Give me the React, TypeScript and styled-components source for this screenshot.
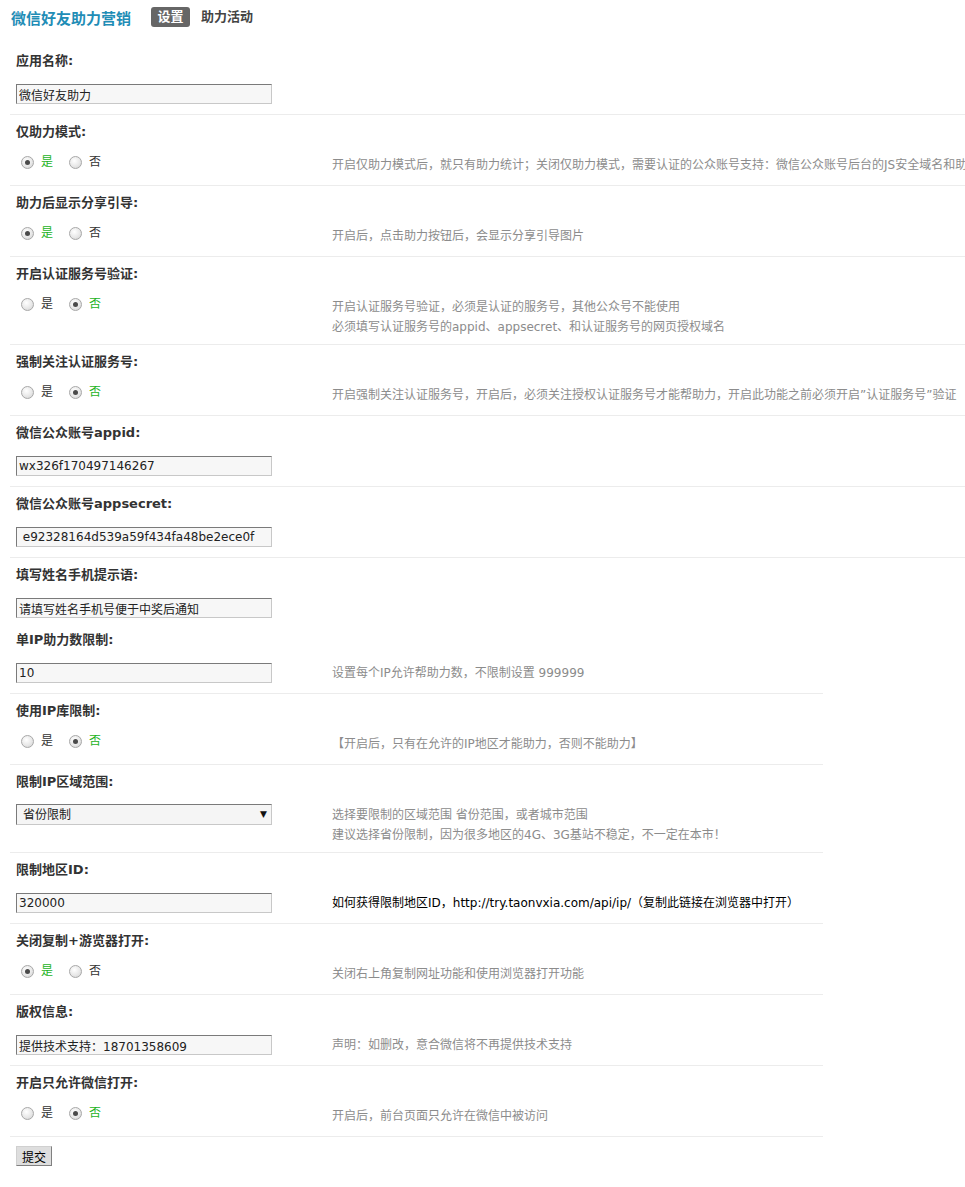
import React from "react";
import styled, { createGlobalStyle, css } from "styled-components";

const FONT = `"DejaVu Sans", "Noto Sans CJK SC", sans-serif`;

const GlobalStyle = createGlobalStyle`
  html, body {
    margin: 0;
    padding: 0;
    background: #ffffff;
  }
  body {
    font-family: ${FONT};
    font-size: 12px;
    color: #333333;
  }
  * { box-sizing: border-box; }
`;

const Page = styled.div`
  width: 965px;
  overflow: hidden;
  padding-bottom: 20px;
`;

const Header = styled.div`
  display: flex;
  align-items: center;
  height: 34px;
  padding-left: 11px;
  margin-bottom: 10px;
`;

const Title = styled.div`
  font-size: 15px;
  font-weight: bold;
  color: #1f8db6;
  margin-right: 20px;
  white-space: nowrap;
`;

const Tab = styled.div<{ $active?: boolean }>`
  height: 20px;
  line-height: 20px;
  font-size: 13px;
  font-weight: bold;
  white-space: nowrap;
  border-radius: 3px;
  ${(p) =>
    p.$active
      ? css`
          background: #666666;
          color: #ffffff;
          width: 39px;
          text-align: center;
          margin-right: 11px;
        `
      : css`
          color: #444444;
        `}
`;

const Section = styled.div<{ $width: number }>`
  width: ${(p) => p.$width}px;
  margin-left: 10px;
  display: flex;
  flex-direction: column;
`;

const Row = styled.div<{ $last?: boolean }>`
  display: flex;
  align-items: stretch;
  border-bottom: ${(p) => (p.$last ? "none" : "1px solid #ececec")};
`;

const FieldCell = styled.div<{ $last?: boolean }>`
  width: 312px;
  flex: none;
  padding: 9px 6px ${(p) => (p.$last ? "5px" : "10px")} 6px;
`;

const Label = styled.div`
  height: 16px;
  line-height: 16px;
  font-size: 13px;
  font-weight: bold;
  color: #333333;
  margin-bottom: 9px;
  white-space: nowrap;
`;

const Control = styled.div<{ $align: "center" | "end" }>`
  height: 26px;
  display: flex;
  align-items: ${(p) => (p.$align === "center" ? "center" : "flex-end")};
`;

const TextInput = styled.input`
  width: 256px;
  height: 20px;
  padding: 0 2px;
  margin: 0;
  font-family: ${FONT};
  font-size: 12px;
  color: #222222;
  background: #f7f7f7;
  border-style: solid;
  border-width: 1px;
  border-color: #7a7a7a #c8c8c8 #c8c8c8 #7a7a7a;
  outline: none;
  white-space: pre;
`;

const RadioGroup = styled.div`
  display: flex;
  align-items: center;
  padding-left: 5px;
`;

const RadioItem = styled.label`
  display: flex;
  align-items: center;
  margin-right: 16px;
  cursor: pointer;
`;

const RadioDot = styled.span<{ $checked?: boolean }>`
  position: relative;
  width: 13px;
  height: 13px;
  border-radius: 50%;
  border: 1px solid #a8a8a8;
  background: radial-gradient(circle at 40% 35%, #ffffff 0%, #e8e8e8 55%, #cfcfcf 100%);
  margin-right: 7px;
  &::after {
    content: "";
    display: ${(p) => (p.$checked ? "block" : "none")};
    position: absolute;
    left: 3px;
    top: 3px;
    width: 5px;
    height: 5px;
    border-radius: 50%;
    background: #4a4a4a;
  }
`;

const RadioText = styled.span<{ $checked?: boolean }>`
  font-size: 12px;
  line-height: 16px;
  color: ${(p) => (p.$checked ? "#1db31d" : "#333333")};
`;

const SelectWrap = styled.div`
  position: relative;
  width: 256px;
  height: 21px;
`;

const SelectBox = styled.select`
  appearance: none;
  -webkit-appearance: none;
  width: 256px;
  height: 21px;
  padding: 0 0 0 6px;
  margin: 0;
  font-family: ${FONT};
  font-size: 12px;
  color: #222222;
  background: #f5f5f5;
  border-style: solid;
  border-width: 1px;
  border-color: #7a7a7a #c8c8c8 #c8c8c8 #7a7a7a;
  border-radius: 0;
  outline: none;
`;

const SelectArrow = styled.span`
  position: absolute;
  right: 5px;
  top: 4px;
  font-size: 9px;
  line-height: 12px;
  color: #111111;
  pointer-events: none;
`;

const HelpCell = styled.div`
  flex: 1;
  min-width: 0;
  padding: 40px 0 7px 10px;
  white-space: nowrap;
`;

const HelpLine = styled.div<{ $dark?: boolean }>`
  font-size: 12px;
  line-height: 20px;
  color: ${(p) => (p.$dark ? "#000000" : "#8c8c8c")};
`;

const SubmitButton = styled.button`
  margin: 9px 0 0 6px;
  width: 36px;
  height: 20px;
  padding: 0;
  font-family: ${FONT};
  font-size: 12px;
  color: #000000;
  background: #dedede;
  border-style: solid;
  border-width: 1px;
  border-color: #d0d0d0 #808080 #808080 #d0d0d0;
  cursor: pointer;
`;

type Field =
  | { kind: "input"; label: string; value: string }
  | { kind: "radio"; label: string; yes: boolean }
  | { kind: "select"; label: string; value: string };

type RowData = {
  field: Field;
  help?: string[];
  dark?: boolean;
  last?: boolean;
};

const sectionOne: RowData[] = [
  { field: { kind: "input", label: "应用名称:", value: "微信好友助力" } },
  {
    field: { kind: "radio", label: "仅助力模式:", yes: true },
    help: [
      "开启仅助力模式后，就只有助力统计；关闭仅助力模式，需要认证的公众账号支持：微信公众账号后台的JS安全域名和助力活动",
    ],
  },
  {
    field: { kind: "radio", label: "助力后显示分享引导:", yes: true },
    help: ["开启后，点击助力按钮后，会显示分享引导图片"],
  },
  {
    field: { kind: "radio", label: "开启认证服务号验证:", yes: false },
    help: [
      "开启认证服务号验证，必须是认证的服务号，其他公众号不能使用",
      "必须填写认证服务号的appid、appsecret、和认证服务号的网页授权域名",
    ],
  },
  {
    field: { kind: "radio", label: "强制关注认证服务号:", yes: false },
    help: [
      "开启强制关注认证服务号，开启后，必须关注授权认证服务号才能帮助力，开启此功能之前必须开启”认证服务号”验证",
    ],
  },
  { field: { kind: "input", label: "微信公众账号appid:", value: "wx326f170497146267" } },
  {
    field: {
      kind: "input",
      label: "微信公众账号appsecret:",
      value: " e92328164d539a59f434fa48be2ece0f",
    },
  },
  {
    field: { kind: "input", label: "填写姓名手机提示语:", value: "请填写姓名手机号便于中奖后通知" },
    last: true,
  },
];

const sectionTwo: RowData[] = [
  {
    field: { kind: "input", label: "单IP助力数限制:", value: "10" },
    help: ["设置每个IP允许帮助力数，不限制设置 999999"],
  },
  {
    field: { kind: "radio", label: "使用IP库限制:", yes: false },
    help: ["【开启后，只有在允许的IP地区才能助力，否则不能助力】"],
  },
  {
    field: { kind: "select", label: "限制IP区域范围:", value: "省份限制" },
    help: [
      "选择要限制的区域范围 省份范围，或者城市范围",
      "建议选择省份限制，因为很多地区的4G、3G基站不稳定，不一定在本市！",
    ],
  },
  {
    field: { kind: "input", label: "限制地区ID:", value: "320000" },
    help: ["如何获得限制地区ID，http://try.taonvxia.com/api/ip/（复制此链接在浏览器中打开）"],
    dark: true,
  },
  {
    field: { kind: "radio", label: "关闭复制+游览器打开:", yes: true },
    help: ["关闭右上角复制网址功能和使用浏览器打开功能"],
  },
  {
    field: { kind: "input", label: "版权信息:", value: "提供技术支持：18701358609" },
    help: ["声明：如删改，意合微信将不再提供技术支持"],
  },
  {
    field: { kind: "radio", label: "开启只允许微信打开:", yes: false },
    help: ["开启后，前台页面只允许在微信中被访问"],
  },
];

function FieldControl({ field, name }: { field: Field; name: string }) {
  if (field.kind === "input") {
    return (
      <Control $align="end">
        <TextInput type="text" defaultValue={field.value} />
      </Control>
    );
  }
  if (field.kind === "select") {
    return (
      <Control $align="end">
        <SelectWrap>
          <SelectBox defaultValue={field.value}>
            <option value="省份限制">省份限制</option>
            <option value="城市限制">城市限制</option>
          </SelectBox>
          <SelectArrow>▼</SelectArrow>
        </SelectWrap>
      </Control>
    );
  }
  return (
    <Control $align="center">
      <RadioGroup>
        <RadioItem>
          <RadioDot $checked={field.yes} />
          <RadioText $checked={field.yes}>是</RadioText>
        </RadioItem>
        <RadioItem>
          <RadioDot $checked={!field.yes} />
          <RadioText $checked={!field.yes}>否</RadioText>
        </RadioItem>
      </RadioGroup>
    </Control>
  );
}

function FormRow({ row, name }: { row: RowData; name: string }) {
  return (
    <Row $last={row.last}>
      <FieldCell $last={row.last}>
        <Label>{row.field.label}</Label>
        <FieldControl field={row.field} name={name} />
      </FieldCell>
      {row.help ? (
        <HelpCell>
          {row.help.map((line, i) => (
            <HelpLine key={i} $dark={row.dark}>
              {line}
            </HelpLine>
          ))}
        </HelpCell>
      ) : (
        <HelpCell />
      )}
    </Row>
  );
}

export default function App() {
  return (
    <>
      <GlobalStyle />
      <Page>
        <Header>
          <Title>微信好友助力营销</Title>
          <Tab $active>设置</Tab>
          <Tab>助力活动</Tab>
        </Header>
        <Section $width={955}>
          {sectionOne.map((row, i) => (
            <FormRow key={i} row={row} name={`a${i}`} />
          ))}
        </Section>
        <Section $width={813}>
          {sectionTwo.map((row, i) => (
            <FormRow key={i} row={row} name={`b${i}`} />
          ))}
          <div>
            <SubmitButton type="button">提交</SubmitButton>
          </div>
        </Section>
      </Page>
    </>
  );
}
